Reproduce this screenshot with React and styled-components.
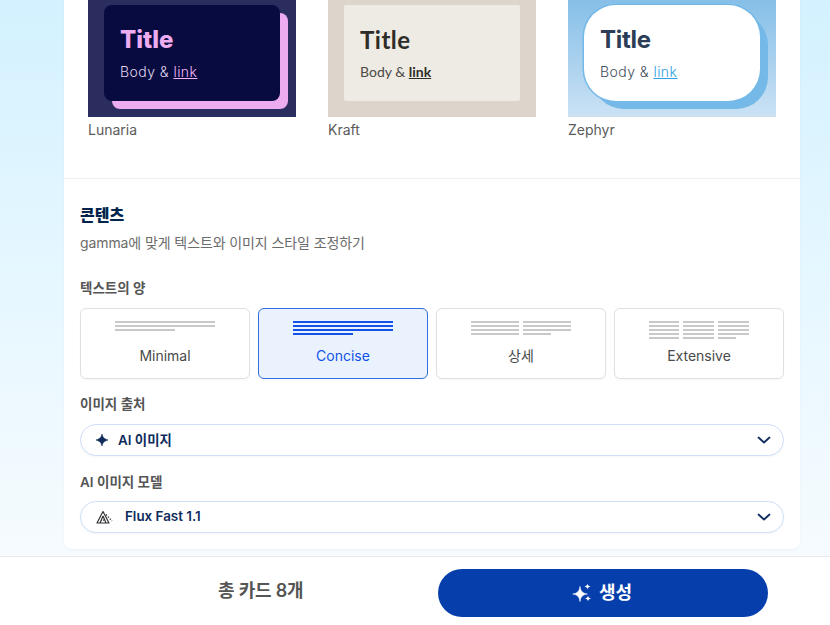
import styled, { createGlobalStyle } from 'styled-components';

const GlobalStyle = createGlobalStyle`
  html, body {
    margin: 0;
    padding: 0;
    height: 100%;
    overflow: hidden;
  }
  body {
    font-family: Inter, "Noto Sans CJK KR", sans-serif;
    color: #4a4a4a;
  }
`;

const Page = styled.div`
  width: 830px;
  height: 625px;
  display: flex;
  flex-direction: column;
  background: linear-gradient(180deg, #d3f1ff 0%, #e6f7ff 45%, #f6fbfe 90%);
`;

const Main = styled.main`
  flex: 1;
  min-height: 0;
  padding: 0 30px 7px 64px;
`;

const Card = styled.section`
  height: 100%;
  box-sizing: border-box;
  background: #fff;
  border-radius: 0 0 8px 8px;
  box-shadow: 0 1px 2px rgba(20, 50, 90, 0.05);
`;

const ThemeGrid = styled.div`
  display: grid;
  grid-template-columns: repeat(3, 208px);
  column-gap: 32px;
  padding: 0 24px;
  height: 179px;
  box-sizing: border-box;
  border-bottom: 1px solid #f0f1f3;
`;

const ThemeItem = styled.div`
  display: flex;
  flex-direction: column;
`;

const Thumb = styled.div`
  height: 117px;
  box-sizing: border-box;
  padding: 5px 16px 0;
  background: ${({ $bg }) => $bg};
`;

const ThumbCard = styled.div`
  width: 176px;
  height: 96px;
  box-sizing: border-box;
  padding: 20px 16px 0;
  background: ${({ $bg }) => $bg};
  border-radius: ${({ $radius }) => $radius};
  box-shadow: ${({ $shadow }) => $shadow || 'none'};
`;

const ThumbTitle = styled.div`
  font-family: ${({ $font }) => $font};
  font-size: 24px;
  line-height: 30px;
  font-weight: ${({ $weight }) => $weight || 700};
  letter-spacing: ${({ $spacing }) => $spacing || 0}px;
  color: ${({ $color }) => $color};
`;

const ThumbBody = styled.div`
  margin-top: 8px;
  font-family: ${({ $font }) => $font};
  font-size: 14px;
  line-height: 18px;
  font-weight: ${({ $weight }) => $weight || 400};
  letter-spacing: ${({ $spacing }) => $spacing || 0}px;
  color: ${({ $color }) => $color};

  a {
    color: ${({ $link }) => $link};
    font-weight: ${({ $linkWeight }) => $linkWeight || 'inherit'};
    text-decoration: underline;
  }
`;

const ThemeName = styled.div`
  margin-top: 4px;
  font-size: 14px;
  line-height: 18px;
  color: #5b5b5b;
`;

const Content = styled.div`
  padding: 25px 16px 0;
`;

const Heading = styled.h2`
  margin: 0;
  font-size: 16px;
  line-height: 22px;
  font-weight: 800;
  color: #00234b;
`;

const Sub = styled.p`
  margin: 7px 0 0;
  font-size: 14px;
  line-height: 20px;
  letter-spacing: -0.1px;
  color: #6b6b6b;
`;

const FieldLabel = styled.div`
  font-size: 13.5px;
  line-height: 18px;
  font-weight: 600;
  color: #555;
  margin-top: ${({ $top }) => $top}px;
`;

const AmountRow = styled.div`
  display: grid;
  grid-template-columns: repeat(4, 170px);
  column-gap: 8px;
  margin-top: 11px;
`;

const AmountButton = styled.button`
  height: 71px;
  box-sizing: border-box;
  padding: 12px 0 0;
  display: flex;
  flex-direction: column;
  align-items: center;
  font-family: inherit;
  font-size: 14px;
  line-height: 17px;
  border-radius: 6px;
  border: 1px solid ${({ $active }) => ($active ? '#2f6fdf' : '#e0e0e0')};
  background: ${({ $active }) => ($active ? '#eaf2fd' : '#fff')};
  color: ${({ $active }) => ($active ? '#1252e8' : '#4a4a4a')};
  box-shadow: 0 1px 2px rgba(0, 0, 0, 0.04);
`;

const LinesWrap = styled.span`
  height: 18px;
  display: flex;
  gap: ${({ $gap }) => $gap}px;
  margin-bottom: 8px;
`;

const LinesColumn = styled.span`
  width: ${({ $w }) => $w}px;
  display: flex;
  flex-direction: column;
  gap: 2px;
`;

const Line = styled.span`
  display: block;
  flex-shrink: 0;
  height: 2px;
  width: ${({ $w }) => $w}px;
  background: ${({ $active }) => ($active ? '#1252e8' : '#c8c8c8')};
`;

const Select = styled.div`
  height: 32px;
  margin-top: ${({ $top }) => $top}px;
  box-sizing: border-box;
  display: flex;
  align-items: center;
  padding: 0 11px 0 14px;
  background: #fff;
  border: 1px solid #cfe0f7;
  border-radius: 16px;
  box-shadow: 0 1px 2px rgba(20, 50, 90, 0.05);
`;

const SelectText = styled.span`
  flex: 1;
  margin-left: ${({ $gap }) => $gap}px;
  padding-bottom: 2px;
  font-size: 13.4px;
  font-weight: 600;
  color: #0f2c5c;
`;

const Footer = styled.footer`
  height: 69px;
  box-sizing: border-box;
  flex-shrink: 0;
  display: flex;
  align-items: flex-start;
  padding: 12px 0 0 218px;
  background: #fff;
  border-top: 1px solid #e8e9eb;
`;

const Total = styled.span`
  width: 220px;
  margin-top: 10px;
  font-size: 18px;
  line-height: 24px;
  letter-spacing: -0.2px;
  font-weight: 600;
  color: #555;
`;

const Generate = styled.button`
  width: 330px;
  height: 48px;
  display: flex;
  align-items: center;
  justify-content: center;
  gap: 6px;
  padding: 0 2px 0 0;
  border: none;
  border-radius: 24px;
  background: #063fac;
  color: #fff;
  font-family: inherit;
  font-size: 18px;
  font-weight: 700;
`;

const GenerateLabel = styled.span`
  margin-bottom: 4px;
`;

const Chevron = () => (
  <svg width="16" height="16" viewBox="0 0 16 16" fill="none">
    <path d="M2.5 5.5 8 10.5l5.5-5" stroke="#0f2c5c" strokeWidth="1.8" strokeLinecap="round" strokeLinejoin="round" />
  </svg>
);

const Sparkle = () => (
  <svg width="14" height="14" viewBox="0 0 14 14">
    <path d="M7 1C7.5 3.4 8.4 5.7 13 7 8.4 8.3 7.5 10.6 7 13 6.5 10.6 5.6 8.3 1 7 5.6 5.7 6.5 3.4 7 1Z" fill="#0f2c5c" stroke="#0f2c5c" strokeWidth="0.6" strokeLinejoin="round" />
  </svg>
);

const FluxIcon = () => (
  <svg width="18" height="14" viewBox="0 0 18 14" fill="none" stroke="#333" strokeWidth="1.2">
    <path d="M8 1.5 2 13h12L8 1.5Z" strokeLinejoin="round" />
    <path d="M8 6 5 13M8 6l3 7" />
    <path d="M6 10.2h4" strokeDasharray="1 1" />
    <path d="M11 4.5 17 11" strokeDasharray="1.4 1.4" />
  </svg>
);

const Stars = () => (
  <svg width="21" height="20" viewBox="0 0 21 20" fill="#fff">
    <path d="M8 3.5C8.7 8.2 10.4 10.3 15.3 11 10.4 11.7 8.7 13.8 8 18.5 7.3 13.8 5.6 11.7 0.7 11 5.6 10.3 7.3 8.2 8 3.5Z" stroke="#fff" strokeWidth="0.6" strokeLinejoin="round" />
    <path d="M15.5 0.5C15.8 2.3 16.6 3.1 18.5 3.5 16.6 3.9 15.8 4.7 15.5 6.5 15.2 4.7 14.4 3.9 12.5 3.5 14.4 3.1 15.2 2.3 15.5 0.5Z" />
    <path d="M16 12.5C16.3 14.3 17 15.1 19 15.5 17 15.9 16.3 16.7 16 18.5 15.7 16.7 15 15.9 13 15.5 15 15.1 15.7 14.3 16 12.5Z" />
  </svg>
);

const themes = [
  {
    name: 'Lunaria',
    bg: '#2b2d5f',
    card: { bg: '#070b40', radius: '8px', shadow: '8px 8px 0 #edabf0' },
    font: 'Inter, sans-serif',
    titleWeight: 800,
    bodyWeight: 300,
    bodySpacing: 0.45,
    title: '#edabf0',
    body: '#e2d6ec',
    link: '#f3b4f5',
  },
  {
    name: 'Kraft',
    bg: '#ddd5cb',
    card: { bg: '#eeebe4', radius: '2px' },
    font: 'Lato, sans-serif',
    titleSpacing: 0.5,
    title: '#2e2c28',
    body: '#4c4a45',
    link: '#2e2c28',
    linkWeight: 700,
  },
  {
    name: 'Zephyr',
    bg: 'linear-gradient(180deg, #86bfe8 0%, #cbe2f4 100%)',
    card: { bg: '#fff', radius: '32px', shadow: '0 0 0 1.5px #74b9e8, 8px 8px 0 #74b9e8' },
    font: 'Inter, sans-serif',
    titleWeight: 700,
    titleSpacing: -0.3,
    bodyWeight: 300,
    bodySpacing: 0.45,
    title: '#2c3e57',
    body: '#414c5c',
    link: '#2f9fe2',
  },
];

const amounts = [
  { label: 'Minimal', columns: [[100, 100, 60]], gap: 0 },
  { label: 'Concise', active: true, columns: [[100, 100, 100, 60]], gap: 0 },
  { label: '상세', columns: [[48, 48, 48, 48], [48, 48, 48, 28]], gap: 4 },
  {
    label: 'Extensive',
    columns: [[30, 30, 30, 30, 30], [31, 31, 31, 31, 31], [31, 31, 31, 31, 18]],
    gap: 4,
  },
];

const App = () => (
  <Page>
    <GlobalStyle />
    <Main>
      <Card>
        <ThemeGrid>
          {themes.map((t) => (
            <ThemeItem key={t.name}>
              <Thumb $bg={t.bg}>
                <ThumbCard $bg={t.card.bg} $radius={t.card.radius} $shadow={t.card.shadow}>
                  <ThumbTitle $font={t.font} $color={t.title} $weight={t.titleWeight} $spacing={t.titleSpacing}>
                    Title
                  </ThumbTitle>
                  <ThumbBody
                    $font={t.font}
                    $color={t.body}
                    $link={t.link}
                    $linkWeight={t.linkWeight}
                    $weight={t.bodyWeight}
                    $spacing={t.bodySpacing}
                  >
                    Body &amp; <a>link</a>
                  </ThumbBody>
                </ThumbCard>
              </Thumb>
              <ThemeName>{t.name}</ThemeName>
            </ThemeItem>
          ))}
        </ThemeGrid>
        <Content>
          <Heading>콘텐츠</Heading>
          <Sub>gamma에 맞게 텍스트와 이미지 스타일 조정하기</Sub>
          <FieldLabel $top={26}>텍스트의 양</FieldLabel>
          <AmountRow>
            {amounts.map((a) => (
              <AmountButton key={a.label} $active={a.active}>
                <LinesWrap $gap={a.gap}>
                  {a.columns.map((col, i) => (
                    <LinesColumn key={i} $w={col[0]}>
                      {col.map((w, j) => (
                        <Line key={j} $w={w} $active={a.active} />
                      ))}
                    </LinesColumn>
                  ))}
                </LinesWrap>
                {a.label}
              </AmountButton>
            ))}
          </AmountRow>
          <FieldLabel $top={16}>이미지 출처</FieldLabel>
          <Select $top={11}>
            <Sparkle />
            <SelectText $gap={9}>AI 이미지</SelectText>
            <Chevron />
          </Select>
          <FieldLabel $top={17}>AI 이미지 모델</FieldLabel>
          <Select $top={10}>
            <FluxIcon />
            <SelectText $gap={12}>Flux Fast 1.1</SelectText>
            <Chevron />
          </Select>
        </Content>
      </Card>
    </Main>
    <Footer>
      <Total>총 카드 8개</Total>
      <Generate>
        <Stars />
        <GenerateLabel>생성</GenerateLabel>
      </Generate>
    </Footer>
  </Page>
);

export default App;
